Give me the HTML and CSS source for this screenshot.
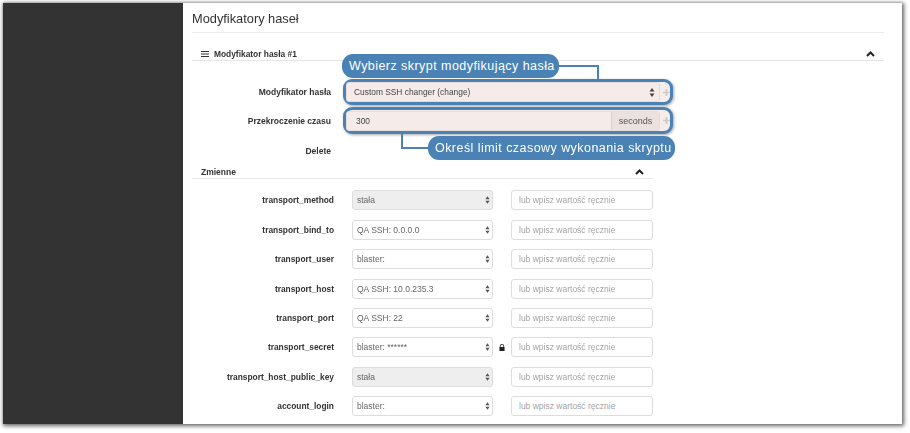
FILE: index.html
```html
<!DOCTYPE html>
<html lang="pl">
<head>
<meta charset="utf-8">
<title>Modyfikatory haseł</title>
<link rel="stylesheet" href="styles.css">
</head>
<body>
<div class="window">
  <aside class="sidebar"></aside>
  <main class="main">
    <h1 class="title">Modyfikatory haseł</h1>
    <div class="section-head">
      <div class="section-name">
        <svg class="burger" viewBox="0 0 8 6" width="8" height="6"><path d="M0 .5h8M0 3h8M0 5.5h8" stroke="#333" stroke-width="1"/></svg>
        <span>Modyfikator hasła #1</span>
      </div>
      <svg class="chev" viewBox="0 0 9 6" width="9" height="6"><path d="M1 5l3.5-3.5L8 5" fill="none" stroke="#222" stroke-width="2"/></svg>
    </div>

    <div class="form-row row-first">
      <div class="label">Modyfikator hasła</div>
      <div class="hl">
        <div class="hl-field">
          <span class="hl-text">Custom SSH changer (change)</span>
          <svg class="updown" viewBox="0 0 6 9" width="6" height="9"><path d="M3 0l2.5 3.5h-5zM3 9L.5 5.5h5z" fill="#444"/></svg>
        </div>
        <svg class="hl-icon" viewBox="0 0 8 8" width="7" height="7"><path d="M3 0h2v3h3v2H5v3H3V5H0V3h3z" fill="#cfcac8"/></svg>
      </div>
    </div>
    <div class="form-row row-second">
      <div class="label">Przekroczenie czasu</div>
      <div class="hl">
        <div class="hl-field hl-group">
          <span class="hl-value">300</span>
          <span class="addon">seconds</span>
        </div>
        <svg class="hl-icon" viewBox="0 0 8 8" width="7" height="7"><path d="M3 0h2v3h3v2H5v3H3V5H0V3h3z" fill="#cfcac8"/></svg>
      </div>
    </div>
    <div class="form-row row-delete">
      <div class="label">Delete</div>
    </div>

    <div class="vars-head">
      <span>Zmienne</span>
      <svg class="chev" viewBox="0 0 9 6" width="9" height="6"><path d="M1 5l3.5-3.5L8 5" fill="none" stroke="#222" stroke-width="2"/></svg>
    </div>

    <div class="vars">
      <div class="var"><div class="vlabel">transport_method</div><div class="select disabled"><span>stała</span><svg class="updown" viewBox="0 0 6 9" width="5" height="8"><path d="M3 0l2.5 3.5h-5zM3 9L.5 5.5h5z" fill="#555"/></svg></div><div class="slot"></div><div class="input">lub wpisz wartość ręcznie</div></div>
      <div class="var"><div class="vlabel">transport_bind_to</div><div class="select"><span>QA SSH: 0.0.0.0</span><svg class="updown" viewBox="0 0 6 9" width="5" height="8"><path d="M3 0l2.5 3.5h-5zM3 9L.5 5.5h5z" fill="#555"/></svg></div><div class="slot"></div><div class="input">lub wpisz wartość ręcznie</div></div>
      <div class="var"><div class="vlabel">transport_user</div><div class="select"><span>blaster:</span><svg class="updown" viewBox="0 0 6 9" width="5" height="8"><path d="M3 0l2.5 3.5h-5zM3 9L.5 5.5h5z" fill="#555"/></svg></div><div class="slot"></div><div class="input">lub wpisz wartość ręcznie</div></div>
      <div class="var"><div class="vlabel">transport_host</div><div class="select"><span>QA SSH: 10.0.235.3</span><svg class="updown" viewBox="0 0 6 9" width="5" height="8"><path d="M3 0l2.5 3.5h-5zM3 9L.5 5.5h5z" fill="#555"/></svg></div><div class="slot"></div><div class="input">lub wpisz wartość ręcznie</div></div>
      <div class="var"><div class="vlabel">transport_port</div><div class="select"><span>QA SSH: 22</span><svg class="updown" viewBox="0 0 6 9" width="5" height="8"><path d="M3 0l2.5 3.5h-5zM3 9L.5 5.5h5z" fill="#555"/></svg></div><div class="slot"></div><div class="input">lub wpisz wartość ręcznie</div></div>
      <div class="var"><div class="vlabel">transport_secret</div><div class="select"><span>blaster: ******</span><svg class="updown" viewBox="0 0 6 9" width="5" height="8"><path d="M3 0l2.5 3.5h-5zM3 9L.5 5.5h5z" fill="#555"/></svg></div><div class="slot"><svg viewBox="0 0 7 8" width="6" height="7"><path d="M1.5 3.5V2.3a2 2 0 0 1 4 0v1.2" fill="none" stroke="#222" stroke-width="1"/><rect x=".5" y="3.5" width="6" height="4.5" rx=".6" fill="#222"/></svg></div><div class="input">lub wpisz wartość ręcznie</div></div>
      <div class="var"><div class="vlabel">transport_host_public_key</div><div class="select disabled"><span>stała</span><svg class="updown" viewBox="0 0 6 9" width="5" height="8"><path d="M3 0l2.5 3.5h-5zM3 9L.5 5.5h5z" fill="#555"/></svg></div><div class="slot"></div><div class="input">lub wpisz wartość ręcznie</div></div>
      <div class="var"><div class="vlabel">account_login</div><div class="select"><span>blaster:</span><svg class="updown" viewBox="0 0 6 9" width="5" height="8"><path d="M3 0l2.5 3.5h-5zM3 9L.5 5.5h5z" fill="#555"/></svg></div><div class="slot"></div><div class="input">lub wpisz wartość ręcznie</div></div>
    </div>

    <div class="pill pill-a">Wybierz skrypt modyfikujący hasła</div>
    <div class="wire wire-a"></div>
    <div class="pill pill-b">Określ limit czasowy wykonania skryptu</div>
    <div class="wire wire-b"></div>
  </main>
</div>
</body>
</html>
```

FILE: styles.css
```css
* { box-sizing: border-box; }
html, body { margin: 0; height: 100%; background: #fff; overflow: hidden; }
body { font-family: "Liberation Sans", Arial, sans-serif; color: #333; }

.window {
  position: relative;
  display: flex;
  width: 899px;
  height: 421px;
  margin: 3px 0 0 3px;
  background: #fff;
  box-shadow: 1px 1px 4px 1px rgba(0, 0, 0, .6), 0 -1px 2px rgba(0, 0, 0, .08);
  overflow: hidden;
  filter: blur(.35px);
}
.sidebar { flex: 0 0 180px; background: #333; }
.main { position: relative; flex: 1; padding: 0 18px 0 9px; overflow: hidden; }

.title {
  margin: 0;
  height: 30px;
  font-size: 12.8px;
  font-weight: 400;
  line-height: 31px;
  color: #333;
  border-bottom: 1px solid #eee;
}
.section-head {
  display: flex;
  align-items: center;
  justify-content: space-between;
  height: 28px;
  padding: 15px 9px 0 9px;
  border-bottom: 1px solid #e6e6e6;
}
.section-name { display: flex; align-items: center; gap: 5px; font-size: 8.4px; font-weight: 700; }
.burger { display: block; }
.chev { display: block; }

.form-row { display: flex; align-items: center; gap: 12px; }
.row-first { height: 26px; margin-top: 18px; }
.row-second { height: 27px; margin-top: 2px; }
.row-delete { height: 20px; margin-top: 7px; }
.label { width: 139px; font-size: 8.5px; font-weight: 700; text-align: right; color: #333; }

.hl {
  display: flex;
  align-items: center;
  width: 330px;
  height: 100%;
  background: #f6ecea;
  border: 3px solid #4a82b5;
  border-radius: 9px;
  box-shadow: 1px 1px 3px rgba(0, 0, 0, .35);
}
.hl-field {
  display: flex;
  align-items: center;
  justify-content: space-between;
  width: 316px;
  height: 20px;
  padding: 0 4px 0 7px;
  font-size: 8.4px;
  color: #444;
  background: #f5ecea;
  border: 1px solid #e6dcd9;
  border-radius: 3px;
}
.hl-group { padding: 0; justify-content: space-between; }
.hl-value { padding-left: 9px; }
.addon {
  display: flex;
  align-items: center;
  justify-content: center;
  width: 48px;
  height: 100%;
  font-size: 9px;
  color: #555;
  background: #ebe2df;
  border-left: 1px solid #dcd2cf;
}
.hl-icon { margin-left: 3px; }

.vars-head {
  display: flex;
  align-items: center;
  justify-content: space-between;
  width: 461px;
  height: 15px;
  margin-top: 3px;
  padding: 1px 9px 0;
  font-size: 8.5px;
  font-weight: 700;
  border-bottom: 1px solid #e9e9e9;
}
.vars { margin-top: 6.8px; }
.var { display: flex; align-items: center; height: 29.36px; }
.vlabel { width: 142px; margin-right: 18px; font-size: 8.4px; font-weight: 700; text-align: right; color: #333; }
.select, .input {
  display: flex;
  align-items: center;
  height: 20px;
  font-size: 8.5px;
  border: 1px solid #ddd;
  border-radius: 3px;
  background: #fff;
}
.select { justify-content: space-between; width: 141px; padding: 0 2px 0 4px; color: #666; }
.select.disabled { background: #eee; }
.slot { display: flex; align-items: center; justify-content: center; width: 18px; }
.input { width: 142px; padding-left: 7px; color: #a4a4a4; }
.updown { display: block; }

.pill {
  position: absolute;
  display: flex;
  align-items: center;
  height: 24px;
  padding: 0 7px;
  font-size: 12.5px;
  letter-spacing: .45px;
  white-space: nowrap;
  color: #fff;
  background: #4a82b5;
  border-radius: 11px;
}
.pill-a { left: 159px; top: 51px; width: 217px; }
.pill-b { left: 245px; top: 133px; width: 247px; }
.wire { position: absolute; border: 0 solid #4a82b5; }
.wire-a { left: 376px; top: 62px; width: 40px; height: 14px; border-width: 2px 2px 0 0; }
.wire-b { left: 218px; top: 131px; width: 27px; height: 15px; border-width: 0 0 2px 2px; }
```
